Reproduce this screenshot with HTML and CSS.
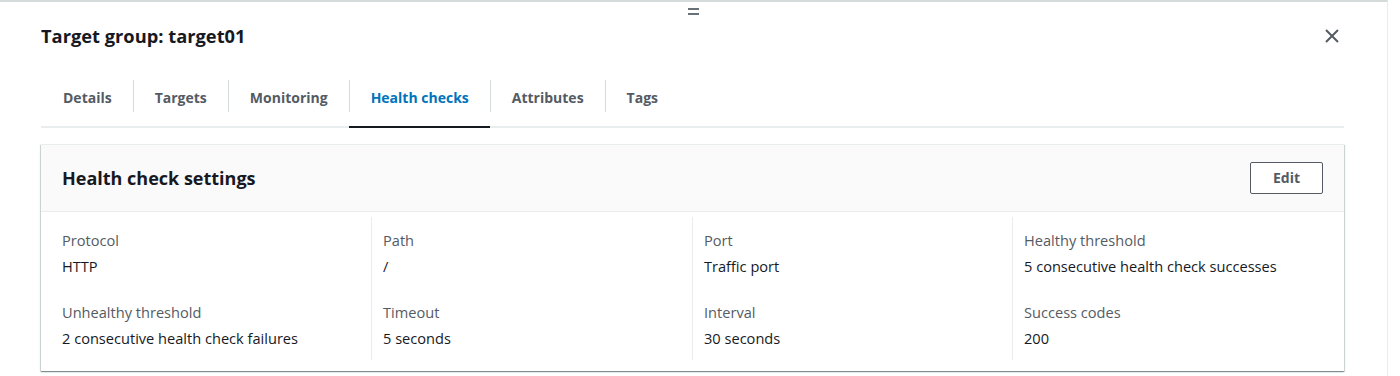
FILE: index.html
```html
<!DOCTYPE html>
<html lang="en">
<head>
    <meta charset="UTF-8">
    <title>Target group: target01</title>
    <link rel="stylesheet" href="styles.css">
</head>
<body>
    <div class="split-panel">
        <div class="drag-handle"><span></span><span></span></div>

        <div class="panel-header">
            <h2>Target group: target01</h2>
            <button class="close-btn" aria-label="Close">
                <svg width="16" height="16" viewBox="0 0 16 16"><path d="M2 2l12 12M14 2L2 14" stroke="#545b64" stroke-width="2" fill="none"/></svg>
            </button>
        </div>

        <ul class="tabs">
            <li>Details</li>
            <li>Targets</li>
            <li>Monitoring</li>
            <li class="active">Health checks</li>
            <li>Attributes</li>
            <li>Tags</li>
        </ul>

        <div class="container">
            <div class="container-header">
                <h3>Health check settings</h3>
                <button class="btn">Edit</button>
            </div>
            <div class="columns">
                <div class="column">
                    <div class="field"><div class="label">Protocol</div><div class="value">HTTP</div></div>
                    <div class="field"><div class="label">Unhealthy threshold</div><div class="value">2 consecutive health check failures</div></div>
                </div>
                <div class="column">
                    <div class="field"><div class="label">Path</div><div class="value">/</div></div>
                    <div class="field"><div class="label">Timeout</div><div class="value">5 seconds</div></div>
                </div>
                <div class="column">
                    <div class="field"><div class="label">Port</div><div class="value">Traffic port</div></div>
                    <div class="field"><div class="label">Interval</div><div class="value">30 seconds</div></div>
                </div>
                <div class="column">
                    <div class="field"><div class="label">Healthy threshold</div><div class="value">5 consecutive health check successes</div></div>
                    <div class="field"><div class="label">Success codes</div><div class="value">200</div></div>
                </div>
            </div>
        </div>
    </div>
</body>
</html>
```

FILE: styles.css
```css
body {
    margin: 0;
    font-family: "Open Sans", Arial, sans-serif;
    font-size: 14px;
    color: #16191f;
    background-color: #fff;
}

.split-panel {
    width: 1346px;
    height: 374px;
    padding: 0 0 0 41px;
    border-top: 2px solid #d5dbdb;
    border-right: 1px solid #eaeded;
    overflow: hidden;
}

.drag-handle {
    display: flex;
    flex-direction: column;
    align-items: center;
    gap: 3px;
    width: 1346px;
    margin-left: -41px;
    padding-top: 6px;
    padding-left: 41px;
    box-sizing: border-box;
}

.drag-handle span {
    width: 11px;
    height: 2px;
    background-color: #687078;
}

.panel-header {
    display: flex;
    justify-content: space-between;
    align-items: center;
    width: 1303px;
    margin-top: 9px;
}

.panel-header h2 {
    margin: 0;
    font-size: 18.3px;
    font-weight: 700;
    line-height: 24px;
}

.close-btn {
    background: none;
    border: none;
    padding: 0;
    margin-right: 4px;
    cursor: pointer;
    display: flex;
}

.tabs {
    display: flex;
    list-style: none;
    margin: 31px 0 0;
    padding: 0;
    width: 1303px;
    border-bottom: 2px solid #eaeded;
}

.tabs li {
    position: relative;
    padding: 8px 21px 17px 22px;
    font-weight: 700;
    color: #545b64;
    line-height: 22px;
    border-bottom: 2px solid transparent;
    margin-bottom: -2px;
}

.tabs li + li::before {
    content: "";
    position: absolute;
    left: 0;
    top: 1px;
    height: 32px;
    border-left: 1px solid #d5dbdb;
}

.tabs li.active {
    color: #0073bb;
    border-bottom-color: #16191f;
}

.container {
    width: 1303px;
    margin-top: 16px;
    box-shadow: 0 1px 1px 0 rgba(0, 28, 36, 0.3), 1px 1px 1px 0 rgba(0, 28, 36, 0.15), -1px 1px 1px 0 rgba(0, 28, 36, 0.15);
    border-top: 1px solid #eaeded;
}

.container-header {
    display: flex;
    justify-content: space-between;
    align-items: center;
    padding: 16px 21px 16px 21px;
    background-color: #fafafa;
    border-bottom: 1px solid #eaeded;
}

.container-header h3 {
    margin: 0;
    font-size: 18px;
    font-weight: 700;
    line-height: 34px;
}

.btn {
    background-color: #fff;
    border: 1px solid #545b64;
    border-radius: 2px;
    color: #545b64;
    font-family: inherit;
    font-size: 14px;
    font-weight: 700;
    padding: 6px 0;
    line-height: 18px;
    width: 73px;
}

.columns {
    display: grid;
    grid-template-columns: 330px 321px 320px 1fr;
    padding: 5px 0 11px 0;
    font-size: 14.6px;
}

.column {
    padding: 12px 11px 0;
}

.column + .column {
    border-left: 1px solid #eaeded;
}

.column:first-child {
    padding-left: 21px;
}

.field {
    margin-bottom: 24px;
}

.field + .field {
    margin-bottom: 11px;
}

.label {
    color: #545b64;
    line-height: 22px;
    margin-bottom: 4px;
}

.value {
    line-height: 22px;
}
```
